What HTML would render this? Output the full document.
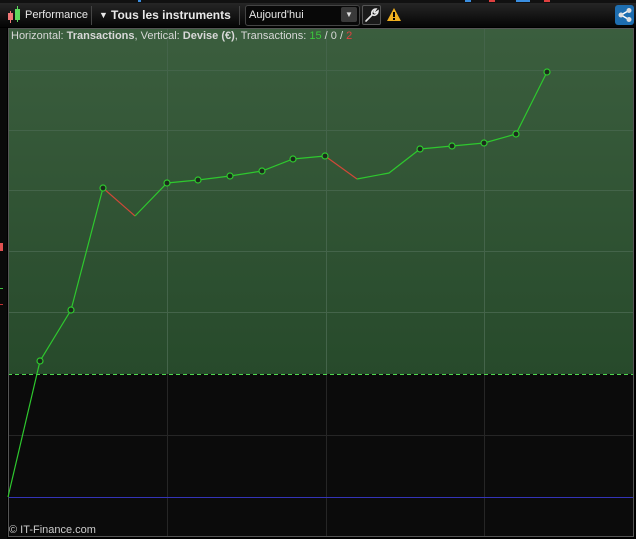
<!DOCTYPE html>
<html><head><style>
body{margin:0;width:636px;height:539px;background:#000;overflow:hidden;position:relative;font-family:"Liberation Sans",sans-serif;}
.tb{position:absolute;left:0;top:3px;width:636px;height:24px;background:linear-gradient(#262626,#050505);}
.t{position:absolute;color:#e8e8e8;font-size:11px;top:9px;}
</style></head><body>
<div style="position:absolute;left:0;top:0;width:636px;height:3px;background:#111"></div>
<div style="position:absolute;left:138px;top:0;width:3px;height:2px;background:#3a8ee0"></div>
<div style="position:absolute;left:465px;top:0;width:6px;height:2px;background:#3a8ee0"></div>
<div style="position:absolute;left:489px;top:0;width:6px;height:2px;background:#e04040"></div>
<div style="position:absolute;left:516px;top:0;width:14px;height:2px;background:#3a8ee0"></div>
<div style="position:absolute;left:544px;top:0;width:6px;height:2px;background:#e04040"></div>
<div class="tb"></div>
<div style="position:absolute;left:10px;top:11px;width:1px;height:12px;background:#f07878"></div>
<div style="position:absolute;left:8px;top:13px;width:5px;height:7px;background:#f07878"></div>
<div style="position:absolute;left:17px;top:6px;width:1px;height:16px;background:#5ed85e"></div>
<div style="position:absolute;left:15px;top:9px;width:5px;height:11px;background:#5ed85e"></div>
<div class="t" style="left:25px">Performance</div>
<div style="position:absolute;left:91px;top:6px;width:1px;height:19px;background:#444"></div>
<div class="t" style="left:99px;font-size:9px;top:10px">▼</div>
<div class="t" style="left:111px;font-weight:bold;font-size:12px;top:8px">Tous les instruments</div>
<div style="position:absolute;left:239px;top:6px;width:1px;height:19px;background:#444"></div>
<div style="position:absolute;left:245px;top:5px;width:113px;height:19px;border:1px solid #444;border-radius:3px;background:#080808"></div>
<div class="t" style="left:249px">Aujourd'hui</div>
<div style="position:absolute;left:341px;top:7px;width:16px;height:15px;background:#3a3a3a;border-radius:2px;color:#ddd;font-size:8px;text-align:center;line-height:15px">▼</div>
<div style="position:absolute;left:362px;top:5px;width:17px;height:18px;border:1px solid #555;background:#1a1a1a;border-radius:2px"></div>
<svg style="position:absolute;left:363px;top:6px" width="17" height="18"><path d="M3,15 L9,9 M9,9 C8,6 10,3 13,3 L11,6 L12,7 L15,5 C15,8 12,10 10,9" fill="none" stroke="#e8e8e8" stroke-width="1.6" stroke-linecap="round"/></svg>
<svg style="position:absolute;left:387px;top:8px" width="14" height="13"><polygon points="7,0 14,13 0,13" fill="#f0b020"/><rect x="6" y="4" width="2" height="5" fill="#000"/><rect x="6" y="10" width="2" height="2" fill="#000"/></svg>
<div style="position:absolute;left:615px;top:5px;width:19px;height:20px;background:#1e6eb0;border-radius:3px"></div>
<svg style="position:absolute;left:617px;top:7px" width="16" height="16"><line x1="4" y1="8" x2="11" y2="4" stroke="#fff" stroke-width="1.5"/><line x1="4" y1="8" x2="11" y2="12" stroke="#fff" stroke-width="1.5"/><circle cx="4" cy="8" r="2.5" fill="#ddd"/><circle cx="12" cy="3.5" r="2.5" fill="#ddd"/><circle cx="12" cy="12.5" r="2.5" fill="#ddd"/></svg>
<div style="position:absolute;left:0;top:28px;width:7px;height:511px;background:#0a0a0a"></div>
<div style="position:absolute;left:0;top:243px;width:3px;height:8px;background:#e05050"></div>
<div style="position:absolute;left:0;top:288px;width:3px;height:1px;background:#40c040"></div>
<div style="position:absolute;left:0;top:304px;width:3px;height:1px;background:#c03030"></div>
<svg style="position:absolute;left:0;top:0" width="636" height="539">
<defs><linearGradient id="g" x1="0" y1="0" x2="0" y2="1"><stop offset="0" stop-color="#3b5e3e"/><stop offset="1" stop-color="#274a2b"/></linearGradient></defs>
<rect x="8" y="28" width="626" height="346" fill="url(#g)"/>
<rect x="8" y="374" width="626" height="162" fill="#0b0b0b"/>
<g stroke="#44644a" stroke-width="1"><line x1="8" y1="70.5" x2="634" y2="70.5"/><line x1="8" y1="130.5" x2="634" y2="130.5"/><line x1="8" y1="190.5" x2="634" y2="190.5"/><line x1="8" y1="251.5" x2="634" y2="251.5"/><line x1="8" y1="312.5" x2="634" y2="312.5"/>
<line x1="167.5" y1="28" x2="167.5" y2="374"/><line x1="326.5" y1="28" x2="326.5" y2="374"/><line x1="484.5" y1="28" x2="484.5" y2="374"/></g>
<g stroke="#262626"><line x1="8" y1="435.5" x2="634" y2="435.5"/><line x1="167.5" y1="374" x2="167.5" y2="536"/><line x1="326.5" y1="374" x2="326.5" y2="536"/><line x1="484.5" y1="374" x2="484.5" y2="536"/></g>
<line x1="8" y1="497.5" x2="634" y2="497.5" stroke="#3434b8"/>
<line x1="8" y1="374.5" x2="634" y2="374.5" stroke="#4ed84e" stroke-dasharray="4,3"/>
<rect x="8.5" y="28.5" width="625" height="508" fill="none" stroke="#555"/>
<polyline fill="none" stroke="#2ec82e" stroke-width="1.2" points="8,497 40,361 71,310 103,188"/>
<line x1="103" y1="188" x2="135" y2="216" stroke="#d04838" stroke-width="1.2"/>
<polyline fill="none" stroke="#2ec82e" stroke-width="1.2" points="135,216 167,183 198,180 230,176 262,171 293,159 325,156"/>
<line x1="325" y1="156" x2="357" y2="179" stroke="#d04838" stroke-width="1.2"/>
<polyline fill="none" stroke="#2ec82e" stroke-width="1.2" points="357,179 389,173 420,149 452,146 484,143 516,134 547,72"/>
<g fill="#1c2a1c" stroke="#2ec82e" stroke-width="1.2">
<circle cx="40" cy="361" r="3"/><circle cx="71" cy="310" r="3"/><circle cx="103" cy="188" r="3"/><circle cx="167" cy="183" r="3"/><circle cx="198" cy="180" r="3"/><circle cx="230" cy="176" r="3"/><circle cx="262" cy="171" r="3"/><circle cx="293" cy="159" r="3"/><circle cx="325" cy="156" r="3"/><circle cx="420" cy="149" r="3"/><circle cx="452" cy="146" r="3"/><circle cx="484" cy="143" r="3"/><circle cx="516" cy="134" r="3"/><circle cx="547" cy="72" r="3"/></g>
</svg>
<div style="position:absolute;left:11px;top:30px;font-size:11px;color:#d8d8d8">Horizontal: <b>Transactions</b>, Vertical: <b>Devise (€)</b>, Transactions: <span style="color:#3cc83c">15</span> / 0 / <span style="color:#e04040">2</span></div>
<div style="position:absolute;left:9px;top:524px;font-size:11px;color:#ccc">© IT-Finance.com</div>
</body></html>
